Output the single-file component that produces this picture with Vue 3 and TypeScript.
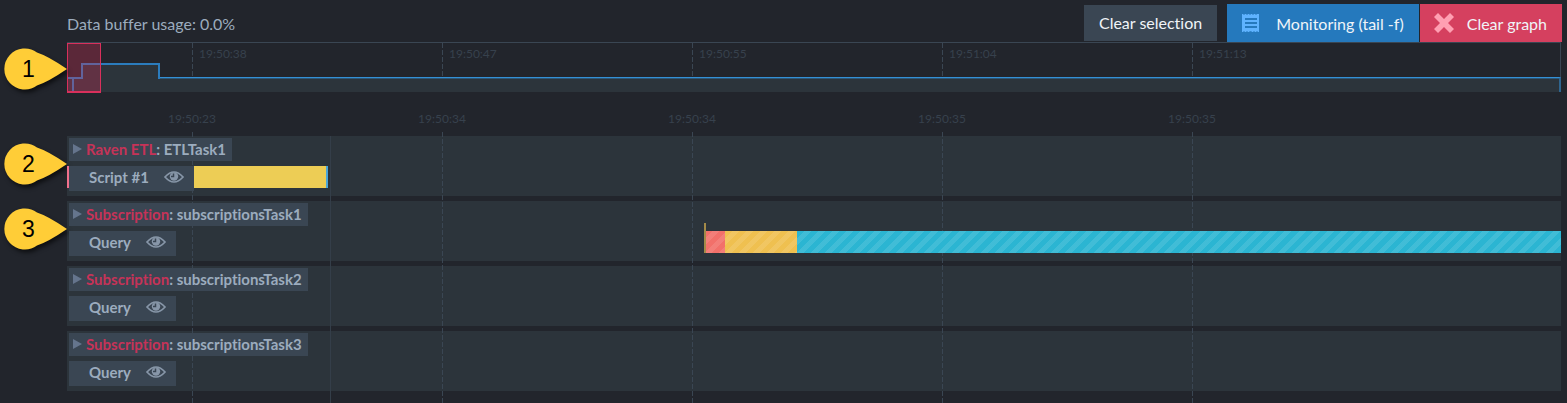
<script setup lang="ts">
interface Bar { start: number; width?: number; kind: string }
interface Track { type: string; name: string; item: string; bars: Bar[] }

const overviewTicks: string[] = ['19:50:38', '19:50:47', '19:50:55', '19:51:04', '19:51:13']
const detailTicks: string[] = ['19:50:23', '19:50:34', '19:50:34', '19:50:35', '19:50:35']
const markers: number[] = [1, 2, 3]
const tracks: Track[] = [
  { type: 'Raven ETL', name: 'ETLTask1', item: 'Script #1', bars: [
    { start: 0, width: 3, kind: 'pink' },
    { start: 127, width: 132, kind: 'yellow' },
    { start: 259, width: 2, kind: 'blue' },
  ] },
  { type: 'Subscription', name: 'subscriptionsTask1', item: 'Query', bars: [
    { start: 638, width: 20, kind: 'red' },
    { start: 658, width: 72, kind: 'amber' },
    { start: 730, kind: 'cyan' },
  ] },
  { type: 'Subscription', name: 'subscriptionsTask2', item: 'Query', bars: [] },
  { type: 'Subscription', name: 'subscriptionsTask3', item: 'Query', bars: [] },
]

function barStyle(bar: Bar): Record<string, string> {
  return bar.width === undefined
    ? { left: `${bar.start}px`, right: '0' }
    : { left: `${bar.start}px`, width: `${bar.width}px` }
}
</script>

<template>
  <main class="page">
    <header class="toolbar">
      <span class="usage">Data buffer usage: 0.0%</span>
      <button type="button" class="btn clear-selection">Clear selection</button>
      <div class="actions">
        <button type="button" class="btn monitoring">
          <svg class="icon" viewBox="0 0 18 20" aria-hidden="true">
            <path fill="#5fb3ff" d="M0 1h1l1 1 1-1h1l1 1 1-1h1l1 1 1-1h1l1 1 1-1h1l1 1 1-1h2v18h-1l-1-1-1 1h-1l-1-1-1 1h-1l-1-1-1 1H9l-1-1-1 1H6l-1-1-1 1H3l-1-1-1 1H0z" />
            <path stroke="#2579bd" stroke-width="2" d="M3 6h12M3 10h12M3 14h12" />
          </svg>
          Monitoring (tail -f)
        </button>
        <button type="button" class="btn clear-graph">
          <svg class="icon cross" viewBox="0 0 20 20" aria-hidden="true">
            <path fill="#ff9fb2" d="M4 0l6 6 6-6 4 4-6 6 6 6-4 4-6-6-6 6-4-4 6-6-6-6z" />
          </svg>
          Clear graph
        </button>
      </div>
    </header>

    <section class="overview" aria-label="Overview">
      <div class="ticks">
        <div v-for="(tick, i) in overviewTicks" :key="i" class="tick"><span>{{ tick }}</span></div>
      </div>
      <div class="load">
        <svg class="steps" viewBox="0 0 93 29" aria-hidden="true">
          <path fill="#2c343b" d="M0 15H15V1H92V15H93V29H0z" />
          <path fill="none" stroke="#2b7cbd" stroke-width="2" d="M0 15H15V1H92V16M6 15V29" />
        </svg>
        <div class="baseline"></div>
      </div>
      <div class="selection"></div>
    </section>

    <section class="detail" aria-label="Timeline">
      <div class="axis">
        <span v-for="(tick, i) in detailTicks" :key="i">{{ tick }}</span>
      </div>
      <div class="tracks">
        <article v-for="track in tracks" :key="track.name" class="track">
          <button type="button" class="tag title">
            <svg class="arrow" viewBox="0 0 9 10" aria-hidden="true"><path fill="#65758d" d="M0 0L9 5L0 10z" /></svg>
            <span><span class="type">{{ track.type }}</span>: {{ track.name }}</span>
          </button>
          <div class="row">
            <div v-for="(bar, i) in track.bars" :key="i" class="bar" :class="bar.kind" :style="barStyle(bar)"></div>
            <button type="button" class="tag item">
              {{ track.item }}
              <svg class="eye" viewBox="0 0 20 12" aria-hidden="true">
                <path fill="none" stroke="#8796a8" stroke-width="1.7" d="M1 6Q10-4 19 6Q10 16 1 6z" />
                <circle cx="10" cy="5.5" r="4.2" fill="#8796a8" />
                <path fill="none" stroke="#3a4653" stroke-width="1.5" d="M9.500 2.500V5.500H7" />
              </svg>
            </button>
          </div>
        </article>
      </div>
      <div class="gridlines">
        <i v-for="(tick, i) in detailTicks" :key="i"></i>
      </div>
      <div class="cursor"></div>
    </section>

    <aside class="markers">
      <div v-for="n in markers" :key="n" class="marker">
        <svg viewBox="0 0 64 42" aria-hidden="true">
          <path fill="#ffcd37" d="M63 21Q44 8 33 4.500A20.500 20.500 0 1 0 33 37.500Q44 34 63 21Z" />
        </svg>
        <span>{{ n }}</span>
      </div>
    </aside>
  </main>
</template>

<style>
html, body { background: #22252c; }
body { margin: 0; }
</style>

<style scoped>
.page {
  position: relative;
  box-sizing: border-box;
  min-height: 100vh;
  padding: 4px 6px 0 67px;
  background: #22252c;
  font-family: Lato, sans-serif;
  font-variant-ligatures: none;
  color: #9cacbe;
}
button { margin: 0; border: 0; font: inherit; font-variant-ligatures: none; color: inherit; white-space: nowrap; }
.toolbar { display: flex; align-items: flex-start; height: 38px; font-size: 16px; line-height: 20px; }
.usage { margin-top: 10px; margin-right: auto; }
.btn { display: flex; align-items: center; height: 38px; color: #f0f4f8; }
.clear-selection { height: 36px; margin: 1px 10px 0 0; padding: 0 15px; background: #3a4653; }
.actions { display: flex; gap: 1px; margin-right: -1px; }
.monitoring { padding: 2px 15px 0 15px; gap: 16px; background: #2579bd; }
.clear-graph { padding: 2px 15px 0 14px; gap: 13px; background: #d5405f; }
.icon { width: 18px; height: 20px; margin-top: -3px; }
.cross { width: 20px; }

.overview { position: relative; height: 50px; box-sizing: border-box; border-top: 1px solid #3a4653; border-right: 1px solid #3a4653; }
.ticks { display: flex; height: 35px; padding-left: 125px; overflow: hidden; }
.tick {
  flex: none;
  width: 250px;
  font-size: 12px;
  line-height: 22px;
  color: #37414d;
  background: repeating-linear-gradient(#3a4653 0 5px, transparent 5px 7px) 0 0 / 1px 100% no-repeat;
}
.tick span { padding-left: 7px; }
.load { position: absolute; inset: auto -1px 0 0; height: 29px; display: flex; align-items: flex-end; }
.steps { flex: none; width: 93px; height: 29px; }
.baseline { flex: 1; box-sizing: border-box; height: 15px; background: #2c343b; border-top: 1px solid #3390d6; border-right: 2px solid #2f658f; box-shadow: inset 0 1px #2c5778; }
.selection { position: absolute; left: 0; top: 0; width: 34px; height: 50px; box-sizing: border-box; border: 1px solid #d9305c; border-bottom-width: 2px; background: rgba(213, 48, 88, 0.32); }

.detail { position: relative; padding-bottom: 12px; }
.axis { display: flex; height: 44px; overflow: hidden; }
.axis span { flex: none; width: 250px; padding-top: 16px; text-align: center; font-size: 12px; line-height: 22px; color: #37414d; }
.tracks { display: flex; flex-direction: column; gap: 5px; }
.track { box-sizing: border-box; height: 60px; padding-top: 2px; background: #2c343b; }
.tag { position: relative; z-index: 2; display: flex; align-items: center; background: #3a4653; font-weight: bold; font-size: 15px; line-height: 18px; }
.title { height: 23px; margin-left: 2px; padding: 0 6px 2px 4px; gap: 4px; }
.arrow { width: 9px; height: 10px; }
.type { color: #c63358; }
.row { position: relative; padding: 5px 0 0 2px; }
.item { height: 25px; padding: 0 10px 3px 20px; gap: 15px; }
.eye { width: 20px; height: 12px; }
.bar { position: absolute; z-index: 1; top: 5px; height: 22px; }
.pink { background: #f0708c; }
.yellow { background: #edcd55; }
.blue { background: #4aa5d8; }
.red, .amber, .cyan { background-image: repeating-linear-gradient(135deg, transparent 0 5px, rgba(255, 255, 255, 0.1) 5px 10px); }
.red { background-color: #f2706a; }
.red::before { content: ""; position: absolute; left: -1px; bottom: 0; width: 2px; height: 30px; background: #a38a48; }
.amber { background-color: #efc050; }
.cyan { background-color: #2bb5d2; }
.gridlines { position: absolute; inset: 40px 0 0; display: flex; overflow: hidden; pointer-events: none; }
.gridlines i {
  flex: none;
  width: 250px;
  background: repeating-linear-gradient(#3a4653 0 5px, transparent 5px 7px) 125px 0 / 1px 100% no-repeat;
}
.cursor { position: absolute; top: 44px; bottom: 0; left: 263px; width: 1px; background: #343e49; }

.markers { position: absolute; left: 4px; top: 48px; }
.marker { position: relative; display: flex; width: 64px; height: 42px; margin-bottom: 23px; }
.marker:first-child { margin-bottom: 53px; }
.marker svg { width: 64px; height: 42px; filter: drop-shadow(2px 3px 2px rgba(0, 0, 0, 0.6)); overflow: visible; }
.marker span { position: absolute; inset: 0 auto 0 0; width: 49px; text-align: center; font: 23px/42px "Liberation Sans", Arial, sans-serif; color: #000; }
</style>
